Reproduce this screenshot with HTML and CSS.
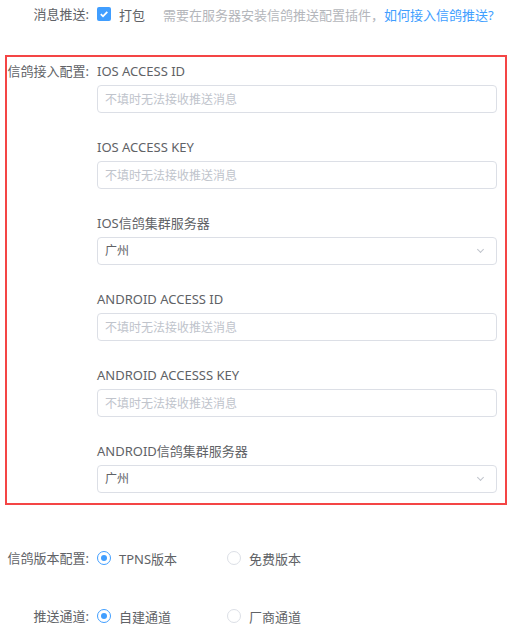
FILE: index.html
```html
<!DOCTYPE html>
<html>
    <head>
        <title>推送配置</title>
        <link rel="stylesheet" href="styles.css">
    </head>
    <body>
        <div class="form">

            <div class="item">
                <label class="item-label">消息推送:</label>
                <div class="item-content inline">
                    <span class="checkbox checked">
                        <svg width="10" height="10" viewBox="0 0 10 10"><path d="M1.8 5.2 L4 7.3 L8.3 2.8" fill="none" stroke="#fff" stroke-width="1.8"/></svg>
                    </span>
                    <span class="check-text">打包</span>
                    <span class="tip">需要在服务器安装信鸽推送配置插件，</span><a href="#" class="link">如何接入信鸽推送?</a>
                </div>
            </div>

            <!-- highlighted block -->
            <div class="item item-box">
                <label class="item-label">信鸽接入配置:</label>
                <div class="item-content">
                    <div class="field">
                        <div class="field-label">IOS ACCESS ID</div>
                        <input class="input" placeholder="不填时无法接收推送消息">
                    </div>
                    <div class="field">
                        <div class="field-label">IOS ACCESS KEY</div>
                        <input class="input" placeholder="不填时无法接收推送消息">
                    </div>
                    <div class="field">
                        <div class="field-label">IOS信鸽集群服务器</div>
                        <div class="input select">广州<span class="arrow"></span></div>
                    </div>
                    <div class="field">
                        <div class="field-label">ANDROID ACCESS ID</div>
                        <input class="input" placeholder="不填时无法接收推送消息">
                    </div>
                    <div class="field">
                        <div class="field-label">ANDROID ACCESSS KEY</div>
                        <input class="input" placeholder="不填时无法接收推送消息">
                    </div>
                    <div class="field">
                        <div class="field-label">ANDROID信鸽集群服务器</div>
                        <div class="input select">广州<span class="arrow"></span></div>
                    </div>
                </div>
            </div>

            <div class="item item-radio">
                <label class="item-label">信鸽版本配置:</label>
                <div class="item-content inline">
                    <span class="radio-opt"><span class="radio checked"></span>TPNS版本</span>
                    <span class="radio-opt"><span class="radio"></span>免费版本</span>
                </div>
            </div>

            <div class="item item-radio2">
                <label class="item-label">推送通道:</label>
                <div class="item-content inline">
                    <span class="radio-opt"><span class="radio checked"></span>自建通道</span>
                    <span class="radio-opt"><span class="radio"></span>厂商通道</span>
                </div>
            </div>

        </div>
    </body>
</html>
```

FILE: styles.css
```css
body{
    margin: 0;
    font-family: "Noto Sans", "Noto Sans CJK SC", sans-serif;
    font-size: 13px;
    color: #606266;
    background: #fff;
}
.form{
    width: 502px;
    padding-left: 5px;
}
.item{
    display: grid;
    grid-template-columns: 82px 1fr;
    column-gap: 8px;
    border: 2px solid transparent;
}
.item-label{
    text-align: right;
    line-height: 24px;
    white-space: nowrap;
}
.inline{
    display: flex;
    align-items: center;
    height: 24px;
    white-space: nowrap;
}

.checkbox{
    width: 14px;
    height: 14px;
    border-radius: 2px;
    background: #409eff;
    display: flex;
    align-items: center;
    justify-content: center;
}
.check-text{
    margin-left: 8px;
}
.tip{
    margin-left: 18px;
    color: #b4b6bb;
}
.link{
    color: #409eff;
    text-decoration: none;
}

.item-box{
    margin-top: 27px;
    border-color: #f44545;
    padding: 4px 8px 10px 0;
}
.item-box .item-label{
    line-height: 20px;
}
.field + .field{
    margin-top: 24px;
}
.field-label{
    line-height: 20px;
    margin-bottom: 4px;
}
.input{
    display: block;
    box-sizing: border-box;
    width: 100%;
    height: 28px;
    border: 1px solid #dcdfe6;
    border-radius: 4px;
    padding: 0 7px;
    font-family: inherit;
    font-size: 12px;
    color: #606266;
    outline: none;
}
.input::placeholder{
    color: #c0c4cc;
}
.select{
    position: relative;
    line-height: 26px;
}
.arrow{
    position: absolute;
    right: 13px;
    top: 9px;
    width: 4px;
    height: 4px;
    border-right: 1px solid #c0c4cc;
    border-bottom: 1px solid #c0c4cc;
    transform: rotate(45deg);
}

.item-radio{
    margin-top: 39px;
}
.item-radio2{
    margin-top: 30px;
}
.radio-opt{
    display: flex;
    align-items: center;
    width: 130px;
}
.radio{
    box-sizing: border-box;
    width: 14px;
    height: 14px;
    border: 1px solid #dcdfe6;
    border-radius: 50%;
    margin-right: 8px;
    position: relative;
}
.radio.checked{
    border-color: #409eff;
}
.radio.checked::after{
    content: "";
    position: absolute;
    left: 3px;
    top: 3px;
    width: 6px;
    height: 6px;
    border-radius: 50%;
    background: #409eff;
}
```
